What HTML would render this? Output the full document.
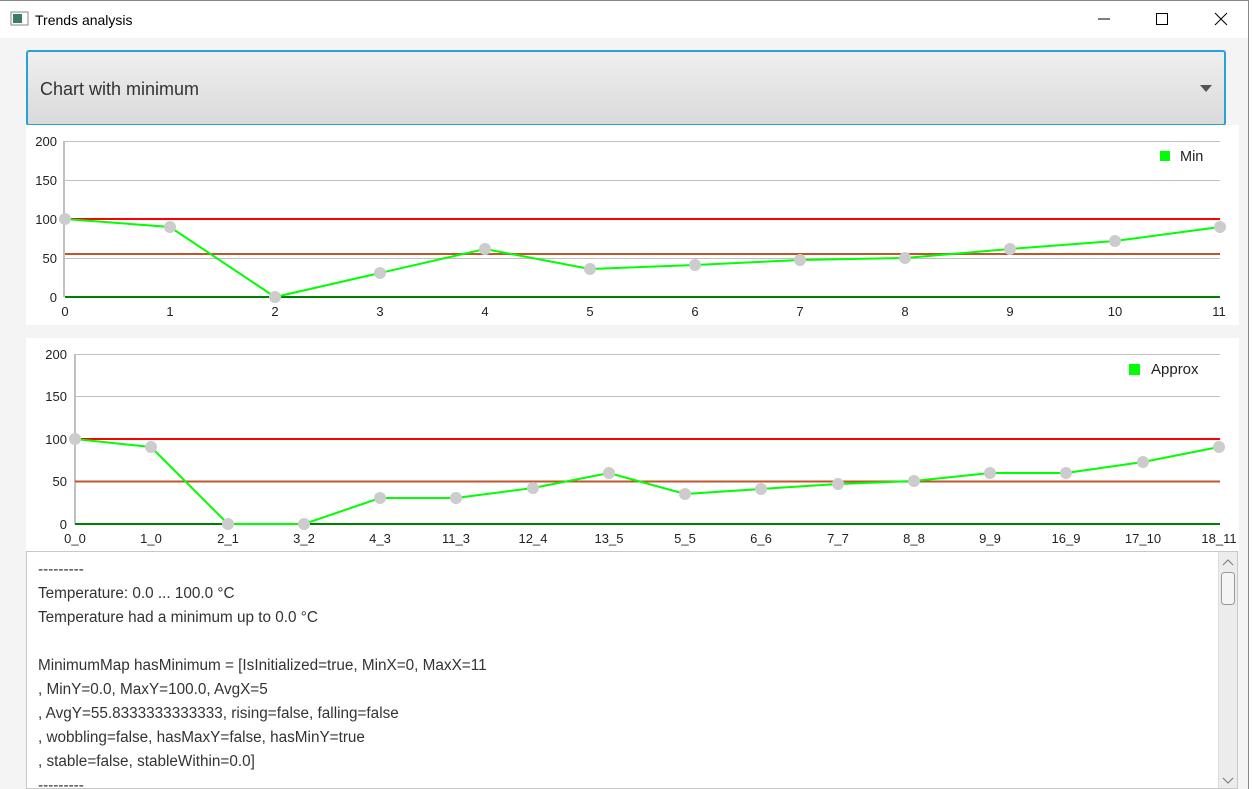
<!DOCTYPE html>
<html><head><meta charset="utf-8"><style>
html,body{margin:0;width:1252px;height:789px;overflow:hidden}
body{background:#f4f4f4;font-family:"Liberation Sans",sans-serif;position:relative}
.title{position:absolute;left:0;top:0;width:1252px;height:38px;background:#fff;border-top:1px solid #888;box-sizing:border-box}
.frame{position:absolute;right:0;top:0;width:3px;height:789px;background:#fff;border-left:1px solid #888}
.combo{position:absolute;left:26px;top:50px;width:1196px;height:72px;border:2px solid #2aa0d8;border-radius:3px;background:linear-gradient(#efefef,#dadada)}
.combo span{position:absolute;left:12px;top:27px;font-size:18px;color:#333}
.combo i{position:absolute;right:12px;top:33px;border-left:6px solid transparent;border-right:6px solid transparent;border-top:7px solid #555}
.ta{position:absolute;left:26px;top:551px;width:1212px;height:238px;background:#fff;border:1px solid #c8c8c8;box-sizing:border-box}
.ta pre{margin:0;position:absolute;left:11px;top:6px;font-family:"Liberation Sans",sans-serif;font-size:15.3px;line-height:24px;color:#333}
.sb{position:absolute;right:0;top:0;width:18px;height:236px;background:#ececec;border-left:1px solid #ddd}
</style></head><body>
<div class="title">
<svg width="1252" height="38" style="position:absolute;left:0;top:-1px">
<rect x="11" y="12" width="17" height="13" fill="#fff" stroke="#888"/><rect x="13" y="14" width="9" height="9" fill="#3c7a6a"/>
<text x="35" y="25" font-size="14" fill="#000" font-family="Liberation Sans">Trends analysis</text>
<line x1="1098" y1="19" x2="1110" y2="19" stroke="#000"/>
<rect x="1156.5" y="13.5" width="11" height="11" fill="none" stroke="#000"/>
<path d="M1215 13 L1227 25 M1227 13 L1215 25" stroke="#000"/>
</svg></div>
<div class="combo"><span>Chart with minimum</span><i></i></div>
<svg width="1252" height="789" style="position:absolute;left:0;top:0" font-family="Liberation Sans" font-size="13" fill="#222">
<rect x="26" y="125" width="1213" height="200" fill="#fff"/>
<g stroke="#c0c0c0"><line x1="65" y1="141.5" x2="1220" y2="141.5"/><line x1="65" y1="180.5" x2="1220" y2="180.5"/><line x1="65" y1="219.5" x2="1220" y2="219.5"/><line x1="65" y1="258.5" x2="1220" y2="258.5"/></g>
<line x1="64" y1="141" x2="64" y2="297" stroke="#c0c0c0" stroke-width="2"/>
<line x1="65" y1="219" x2="1220" y2="219" stroke="#f00" stroke-width="2"/>
<line x1="65" y1="254" x2="1220" y2="254" stroke="#c0562a" stroke-width="2"/>
<line x1="65" y1="297" x2="1220" y2="297" stroke="#008000" stroke-width="2"/>
<g text-anchor="end"><text x="57" y="146">200</text><text x="57" y="185">150</text><text x="57" y="224">100</text><text x="57" y="263">50</text><text x="57" y="302">0</text></g>
<g text-anchor="middle"><text x="65" y="316">0</text><text x="170" y="316">1</text><text x="275" y="316">2</text><text x="380" y="316">3</text><text x="485" y="316">4</text><text x="590" y="316">5</text><text x="695" y="316">6</text><text x="800" y="316">7</text><text x="905" y="316">8</text><text x="1010" y="316">9</text><text x="1115" y="316">10</text><text x="1219" y="316">11</text></g>
<polyline fill="none" stroke="#0f0" stroke-width="2" points="65,219 170,227 275,297 380,273 485,249 590,269 695,265 800,260 905,258 1010,249 1115,241 1220,227"/>
<g fill="#ccc"><circle cx="65" cy="219" r="6"/><circle cx="170" cy="227" r="6"/><circle cx="275" cy="297" r="6"/><circle cx="380" cy="273" r="6"/><circle cx="485" cy="249" r="6"/><circle cx="590" cy="269" r="6"/><circle cx="695" cy="265" r="6"/><circle cx="800" cy="260" r="6"/><circle cx="905" cy="258" r="6"/><circle cx="1010" cy="249" r="6"/><circle cx="1115" cy="241" r="6"/><circle cx="1220" cy="227" r="6"/></g>
<rect x="1160" y="151" width="10" height="10" fill="#0f0"/><text x="1180" y="161" font-size="14.5">Min</text>

<rect x="26" y="338" width="1213" height="213" fill="#fff"/>
<g stroke="#c0c0c0"><line x1="75" y1="354.5" x2="1220" y2="354.5"/><line x1="75" y1="396.5" x2="1220" y2="396.5"/><line x1="75" y1="481.5" x2="1220" y2="481.5"/></g>
<line x1="75" y1="354" x2="75" y2="524" stroke="#c0c0c0" stroke-width="2"/>
<line x1="75" y1="439" x2="1220" y2="439" stroke="#f00" stroke-width="2"/>
<line x1="75" y1="481.5" x2="1220" y2="481.5" stroke="#c0562a" stroke-width="2"/>
<line x1="75" y1="524" x2="1220" y2="524" stroke="#008000" stroke-width="2"/>
<g text-anchor="end"><text x="67" y="359">200</text><text x="67" y="401">150</text><text x="67" y="444">100</text><text x="67" y="486">50</text><text x="67" y="529">0</text></g>
<g text-anchor="middle"><text x="75" y="543">0_0</text><text x="151" y="543">1_0</text><text x="228" y="543">2_1</text><text x="304" y="543">3_2</text><text x="380" y="543">4_3</text><text x="456" y="543">11_3</text><text x="533" y="543">12_4</text><text x="609" y="543">13_5</text><text x="685" y="543">5_5</text><text x="761" y="543">6_6</text><text x="838" y="543">7_7</text><text x="914" y="543">8_8</text><text x="990" y="543">9_9</text><text x="1066" y="543">16_9</text><text x="1143" y="543">17_10</text><text x="1219" y="543">18_11</text></g>
<polyline fill="none" stroke="#0f0" stroke-width="2" points="75,439 151,447 228,524 304,524 380,498 456,498 533,488 609,473 685,494 761,489 838,484 914,481 990,473 1066,473 1143,462 1219,447"/>
<g fill="#ccc"><circle cx="75" cy="439" r="6"/><circle cx="151" cy="447" r="6"/><circle cx="228" cy="524" r="6"/><circle cx="304" cy="524" r="6"/><circle cx="380" cy="498" r="6"/><circle cx="456" cy="498" r="6"/><circle cx="533" cy="488" r="6"/><circle cx="609" cy="473" r="6"/><circle cx="685" cy="494" r="6"/><circle cx="761" cy="489" r="6"/><circle cx="838" cy="484" r="6"/><circle cx="914" cy="481" r="6"/><circle cx="990" cy="473" r="6"/><circle cx="1066" cy="473" r="6"/><circle cx="1143" cy="462" r="6"/><circle cx="1219" cy="447" r="6"/></g>
<rect x="1129" y="364" width="11" height="11" fill="#0f0"/><text x="1151" y="374" font-size="15">Approx</text>
</svg>
<div class="ta"><pre>---------
Temperature: 0.0 ... 100.0 °C
Temperature had a minimum up to 0.0 °C

MinimumMap hasMinimum = [IsInitialized=true, MinX=0, MaxX=11
, MinY=0.0, MaxY=100.0, AvgX=5
, AvgY=55.8333333333333, rising=false, falling=false
, wobbling=false, hasMaxY=false, hasMinY=true
, stable=false, stableWithin=0.0]
---------</pre>
<div class="sb"><svg width="18" height="236"><path d="M4 13 L9 8 L14 13" fill="none" stroke="#777"/><rect x="2.5" y="20.5" width="13" height="32" rx="3" fill="#f4f4f4" stroke="#999"/><path d="M4 226 L9 231 L14 226" fill="none" stroke="#777"/></svg></div>
</div>
<div class="frame"></div>
</body></html>
